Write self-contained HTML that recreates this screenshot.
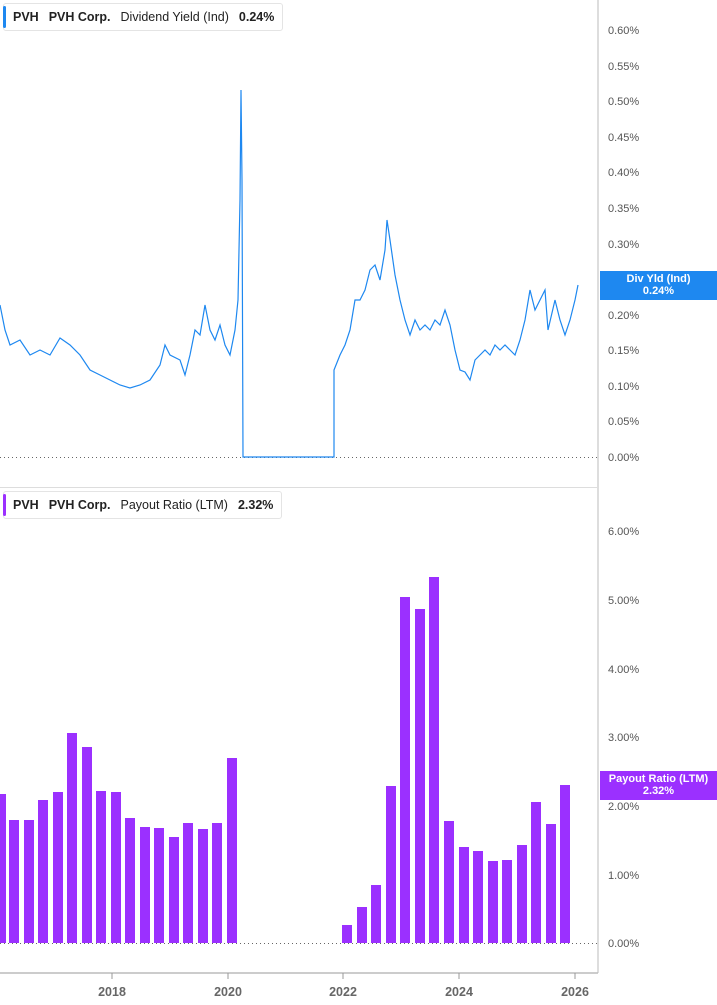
<!DOCTYPE html>
<html><head><meta charset="utf-8"><style>
body{margin:0;width:717px;height:1005px;background:#fff;font-family:"Liberation Sans",sans-serif;overflow:hidden;position:relative}
.lg{position:absolute;left:3px;height:26px;border:1px solid #e4e4e4;border-radius:3px;background:#fff;font-size:12.5px;font-weight:bold;color:#222;line-height:26px;padding-left:9px;padding-right:8px;white-space:nowrap}
.lg:before{content:"";position:absolute;left:-1px;top:2px;bottom:2px;width:3px;border-radius:2px;background:var(--c)}
.lg span{margin-right:10px}
.lg .n{font-weight:normal}
.tag{position:absolute;left:600px;width:117px;color:#fff;font-size:11px;font-weight:bold;text-align:center;line-height:12px;padding-top:2px}
</style></head><body>
<svg width="717" height="1005" style="position:absolute;left:0;top:0" font-family="Liberation Sans" font-size="11" fill="#555">
<line x1="598" y1="0" x2="598" y2="973" stroke="#bbb"/>
<line x1="0" y1="487.5" x2="598" y2="487.5" stroke="#ddd"/>
<line x1="0" y1="973" x2="598" y2="973" stroke="#bbb" stroke-width="1.5"/>
<line x1="0" y1="457.5" x2="598" y2="457.5" stroke="#666" stroke-dasharray="1,3"/>
<line x1="0" y1="943.5" x2="598" y2="943.5" stroke="#666" stroke-dasharray="1,3"/>
<g>
<text x="608" y="34">0.60%</text><text x="608" y="70">0.55%</text><text x="608" y="105">0.50%</text><text x="608" y="141">0.45%</text><text x="608" y="176">0.40%</text><text x="608" y="212">0.35%</text><text x="608" y="248">0.30%</text><text x="608" y="319">0.20%</text><text x="608" y="354">0.15%</text><text x="608" y="390">0.10%</text><text x="608" y="425">0.05%</text><text x="608" y="461">0.00%</text>
<text x="608" y="535">6.00%</text><text x="608" y="604">5.00%</text><text x="608" y="673">4.00%</text><text x="608" y="741">3.00%</text><text x="608" y="810">2.00%</text><text x="608" y="879">1.00%</text><text x="608" y="947">0.00%</text>
</g>
<g stroke="#999"><line x1="112" y1="973" x2="112" y2="979"/><line x1="228" y1="973" x2="228" y2="979"/><line x1="343" y1="973" x2="343" y2="979"/><line x1="459" y1="973" x2="459" y2="979"/><line x1="575" y1="973" x2="575" y2="979"/></g>
<g font-weight="bold" font-size="12.5" fill="#666" text-anchor="middle"><text x="112" y="996">2018</text><text x="228" y="996">2020</text><text x="343" y="996">2022</text><text x="459" y="996">2024</text><text x="575" y="996">2026</text></g>
<polyline fill="none" stroke="#1e88f0" stroke-width="1.2" points="0,305 5,330 10,345 20,340 30,355 40,350 50,355 60,338 70,345 80,355 90,370 100,375 110,380 120,385 130,388 140,385 150,380 160,365 165,345 170,355 180,360 185,375 190,355 195,330 200,335 205,305 210,330 215,340 220,325 225,345 230,355 235,330 238,300 240,200 241,90 242,180 243,457 334,457 334,370 340,355 345,345 350,330 355,300 360,300 365,290 370,270 375,265 380,280 385,250 387,220 390,240 395,275 400,300 405,320 410,335 415,320 420,330 425,325 430,330 435,320 440,325 445,310 450,325 455,350 460,370 465,372 470,380 475,360 480,355 485,350 490,355 495,345 500,350 505,345 510,350 515,355 520,340 525,320 530,290 535,310 540,300 545,290 548,330 555,300 560,320 565,335 570,320 575,300 578,285"/>
<g fill="#9b30ff">
<rect x="-4" y="794" width="10" height="149"/><rect x="9" y="820" width="10" height="123"/><rect x="24" y="820" width="10" height="123"/><rect x="38" y="800" width="10" height="143"/><rect x="53" y="792" width="10" height="151"/><rect x="67" y="733" width="10" height="210"/><rect x="82" y="747" width="10" height="196"/><rect x="96" y="791" width="10" height="152"/><rect x="111" y="792" width="10" height="151"/><rect x="125" y="818" width="10" height="125"/><rect x="140" y="827" width="10" height="116"/><rect x="154" y="828" width="10" height="115"/><rect x="169" y="837" width="10" height="106"/><rect x="183" y="823" width="10" height="120"/><rect x="198" y="829" width="10" height="114"/><rect x="212" y="823" width="10" height="120"/><rect x="227" y="758" width="10" height="185"/>
<rect x="342" y="925" width="10" height="18"/><rect x="357" y="907" width="10" height="36"/><rect x="371" y="885" width="10" height="58"/><rect x="386" y="786" width="10" height="157"/><rect x="400" y="597" width="10" height="346"/><rect x="415" y="609" width="10" height="334"/><rect x="429" y="577" width="10" height="366"/><rect x="444" y="821" width="10" height="122"/><rect x="459" y="847" width="10" height="96"/><rect x="473" y="851" width="10" height="92"/><rect x="488" y="861" width="10" height="82"/><rect x="502" y="860" width="10" height="83"/><rect x="517" y="845" width="10" height="98"/><rect x="531" y="802" width="10" height="141"/><rect x="546" y="824" width="10" height="119"/><rect x="560" y="785" width="10" height="158"/>
</g>
</svg>
<div class="lg" style="top:3px;--c:#1e88f0"><span>PVH</span><span>PVH Corp.</span><span class="n">Dividend Yield (Ind)</span><span style="margin:0">0.24%</span></div>
<div class="lg" style="top:491px;--c:#9b30ff"><span>PVH</span><span>PVH Corp.</span><span class="n">Payout Ratio (LTM)</span><span style="margin:0">2.32%</span></div>
<div class="tag" style="top:271px;height:27px;background:#1e88f0">Div Yld (Ind)<br>0.24%</div>
<div class="tag" style="top:771px;height:27px;background:#9b30ff">Payout Ratio (LTM)<br>2.32%</div>
</body></html>
